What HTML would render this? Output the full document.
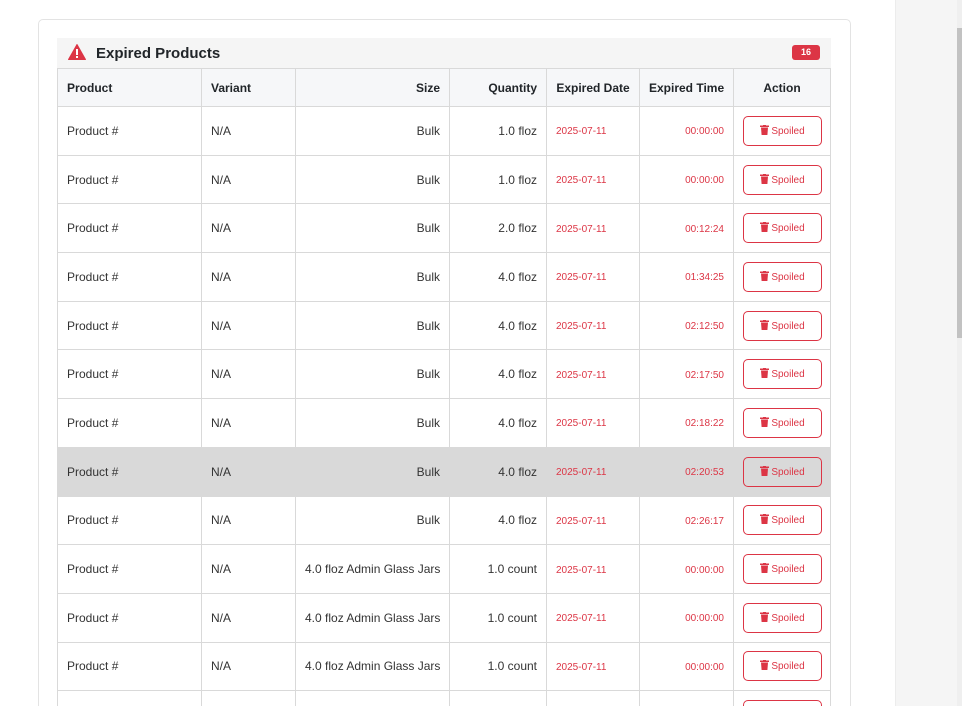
<!DOCTYPE html>
<html style="height:706px;overflow:hidden"><head><meta charset="utf-8"><style>
*{box-sizing:border-box;margin:0;padding:0}
body{width:962px;height:706px;overflow:hidden;background:#fff;font-family:"Liberation Sans",Arial,sans-serif;position:relative}
.panel{position:absolute;left:895px;top:0;width:67px;height:706px;background:#f5f5f5;border-left:1px solid #ececec}
.track{position:absolute;left:957px;top:0;width:5px;height:706px;background:#efefef}
.thumb{position:absolute;left:957px;top:28px;width:5px;height:310px;background:#c2c2c2}
.card{position:absolute;left:38px;top:19px;width:813px;height:700px;border:1px solid #e3e3e3;border-radius:5px;background:#fff}
.hdr{position:absolute;left:57px;top:38px;width:774px;height:30px;background:#f5f5f5}
.hdr .t{position:absolute;left:39px;top:7px;font-size:15px;font-weight:bold;color:#212529}
.badge{position:absolute;left:735px;top:7px;width:28px;height:15px;background:#dc3545;color:#fff;font-size:9px;font-weight:bold;text-align:center;line-height:15px;border-radius:3px}
.wrap{position:absolute;left:57px;top:68px;width:776px;height:638px;overflow:hidden}
table{border-collapse:collapse;font-size:12px;color:#333;table-layout:fixed;width:773px}
td,th{border:1px solid #d9d9d9;padding:0 9px;height:48.7px;white-space:nowrap;vertical-align:middle}
th{height:38px;background:#f6f7f9;font-weight:bold;color:#212529;font-size:12px}
.r{text-align:right}.c{text-align:center}
.red{color:#dc3545;font-size:10px;padding-top:2px}
tr.hl td{background:#d9d9d9}
.btn{display:inline-block;width:79px;height:30px;border:1px solid #dc3545;border-radius:5px;color:#dc3545;font-size:10px;line-height:29px;text-align:center;vertical-align:middle}
.btn svg{vertical-align:-1px;margin-right:2px}
</style></head><body>
<div class="panel"></div><div class="track"></div><div class="thumb"></div>
<div class="card"></div>
<div class="hdr">
<svg style="position:absolute;left:11px;top:6px" width="18" height="16" viewBox="0 0 18 16"><path d="M9 0.5 L17.5 15.5 H0.5 Z" fill="#dc3545" stroke="#dc3545" stroke-linejoin="round"/><rect x="8" y="5" width="2" height="6" fill="#fff"/><rect x="8" y="12" width="2" height="2" fill="#fff"/></svg>
<div class="t">Expired Products</div><div class="badge">16</div></div>
<div class="wrap">
<table>
<colgroup><col style="width:144px"><col style="width:94px"><col style="width:154px"><col style="width:97px"><col style="width:93px"><col style="width:94px"><col style="width:97px"></colgroup>
<tr><th style="text-align:left">Product</th><th style="text-align:left">Variant</th><th class="r">Size</th><th class="r">Quantity</th><th class="c">Expired Date</th><th class="c">Expired Time</th><th class="c">Action</th></tr>
<tr><td>Product #</td><td>N/A</td><td class="r">Bulk</td><td class="r">1.0 floz</td><td class="red">2025-07-11</td><td class="r red">00:00:00</td><td class="c"><span class="btn"><svg width="9" height="10" viewBox="0 0 9 10"><rect x="0" y="0.5" width="9" height="1.5" fill="#dc3545"/><rect x="3" y="0" width="3" height="1" fill="#dc3545"/><path d="M1 2.5H8L7.4 10H1.6Z" fill="#dc3545"/></svg>Spoiled</span></td></tr>
<tr><td>Product #</td><td>N/A</td><td class="r">Bulk</td><td class="r">1.0 floz</td><td class="red">2025-07-11</td><td class="r red">00:00:00</td><td class="c"><span class="btn"><svg width="9" height="10" viewBox="0 0 9 10"><rect x="0" y="0.5" width="9" height="1.5" fill="#dc3545"/><rect x="3" y="0" width="3" height="1" fill="#dc3545"/><path d="M1 2.5H8L7.4 10H1.6Z" fill="#dc3545"/></svg>Spoiled</span></td></tr>
<tr><td>Product #</td><td>N/A</td><td class="r">Bulk</td><td class="r">2.0 floz</td><td class="red">2025-07-11</td><td class="r red">00:12:24</td><td class="c"><span class="btn"><svg width="9" height="10" viewBox="0 0 9 10"><rect x="0" y="0.5" width="9" height="1.5" fill="#dc3545"/><rect x="3" y="0" width="3" height="1" fill="#dc3545"/><path d="M1 2.5H8L7.4 10H1.6Z" fill="#dc3545"/></svg>Spoiled</span></td></tr>
<tr><td>Product #</td><td>N/A</td><td class="r">Bulk</td><td class="r">4.0 floz</td><td class="red">2025-07-11</td><td class="r red">01:34:25</td><td class="c"><span class="btn"><svg width="9" height="10" viewBox="0 0 9 10"><rect x="0" y="0.5" width="9" height="1.5" fill="#dc3545"/><rect x="3" y="0" width="3" height="1" fill="#dc3545"/><path d="M1 2.5H8L7.4 10H1.6Z" fill="#dc3545"/></svg>Spoiled</span></td></tr>
<tr><td>Product #</td><td>N/A</td><td class="r">Bulk</td><td class="r">4.0 floz</td><td class="red">2025-07-11</td><td class="r red">02:12:50</td><td class="c"><span class="btn"><svg width="9" height="10" viewBox="0 0 9 10"><rect x="0" y="0.5" width="9" height="1.5" fill="#dc3545"/><rect x="3" y="0" width="3" height="1" fill="#dc3545"/><path d="M1 2.5H8L7.4 10H1.6Z" fill="#dc3545"/></svg>Spoiled</span></td></tr>
<tr><td>Product #</td><td>N/A</td><td class="r">Bulk</td><td class="r">4.0 floz</td><td class="red">2025-07-11</td><td class="r red">02:17:50</td><td class="c"><span class="btn"><svg width="9" height="10" viewBox="0 0 9 10"><rect x="0" y="0.5" width="9" height="1.5" fill="#dc3545"/><rect x="3" y="0" width="3" height="1" fill="#dc3545"/><path d="M1 2.5H8L7.4 10H1.6Z" fill="#dc3545"/></svg>Spoiled</span></td></tr>
<tr><td>Product #</td><td>N/A</td><td class="r">Bulk</td><td class="r">4.0 floz</td><td class="red">2025-07-11</td><td class="r red">02:18:22</td><td class="c"><span class="btn"><svg width="9" height="10" viewBox="0 0 9 10"><rect x="0" y="0.5" width="9" height="1.5" fill="#dc3545"/><rect x="3" y="0" width="3" height="1" fill="#dc3545"/><path d="M1 2.5H8L7.4 10H1.6Z" fill="#dc3545"/></svg>Spoiled</span></td></tr>
<tr class="hl"><td>Product #</td><td>N/A</td><td class="r">Bulk</td><td class="r">4.0 floz</td><td class="red">2025-07-11</td><td class="r red">02:20:53</td><td class="c"><span class="btn"><svg width="9" height="10" viewBox="0 0 9 10"><rect x="0" y="0.5" width="9" height="1.5" fill="#dc3545"/><rect x="3" y="0" width="3" height="1" fill="#dc3545"/><path d="M1 2.5H8L7.4 10H1.6Z" fill="#dc3545"/></svg>Spoiled</span></td></tr>
<tr><td>Product #</td><td>N/A</td><td class="r">Bulk</td><td class="r">4.0 floz</td><td class="red">2025-07-11</td><td class="r red">02:26:17</td><td class="c"><span class="btn"><svg width="9" height="10" viewBox="0 0 9 10"><rect x="0" y="0.5" width="9" height="1.5" fill="#dc3545"/><rect x="3" y="0" width="3" height="1" fill="#dc3545"/><path d="M1 2.5H8L7.4 10H1.6Z" fill="#dc3545"/></svg>Spoiled</span></td></tr>
<tr><td>Product #</td><td>N/A</td><td class="r">4.0 floz Admin Glass Jars</td><td class="r">1.0 count</td><td class="red">2025-07-11</td><td class="r red">00:00:00</td><td class="c"><span class="btn"><svg width="9" height="10" viewBox="0 0 9 10"><rect x="0" y="0.5" width="9" height="1.5" fill="#dc3545"/><rect x="3" y="0" width="3" height="1" fill="#dc3545"/><path d="M1 2.5H8L7.4 10H1.6Z" fill="#dc3545"/></svg>Spoiled</span></td></tr>
<tr><td>Product #</td><td>N/A</td><td class="r">4.0 floz Admin Glass Jars</td><td class="r">1.0 count</td><td class="red">2025-07-11</td><td class="r red">00:00:00</td><td class="c"><span class="btn"><svg width="9" height="10" viewBox="0 0 9 10"><rect x="0" y="0.5" width="9" height="1.5" fill="#dc3545"/><rect x="3" y="0" width="3" height="1" fill="#dc3545"/><path d="M1 2.5H8L7.4 10H1.6Z" fill="#dc3545"/></svg>Spoiled</span></td></tr>
<tr><td>Product #</td><td>N/A</td><td class="r">4.0 floz Admin Glass Jars</td><td class="r">1.0 count</td><td class="red">2025-07-11</td><td class="r red">00:00:00</td><td class="c"><span class="btn"><svg width="9" height="10" viewBox="0 0 9 10"><rect x="0" y="0.5" width="9" height="1.5" fill="#dc3545"/><rect x="3" y="0" width="3" height="1" fill="#dc3545"/><path d="M1 2.5H8L7.4 10H1.6Z" fill="#dc3545"/></svg>Spoiled</span></td></tr>
<tr><td></td><td></td><td></td><td></td><td></td><td></td><td class="c" style="vertical-align:top;padding-top:9px"><span class="btn"></span></td></tr>
</table>
</div>
</body></html>
